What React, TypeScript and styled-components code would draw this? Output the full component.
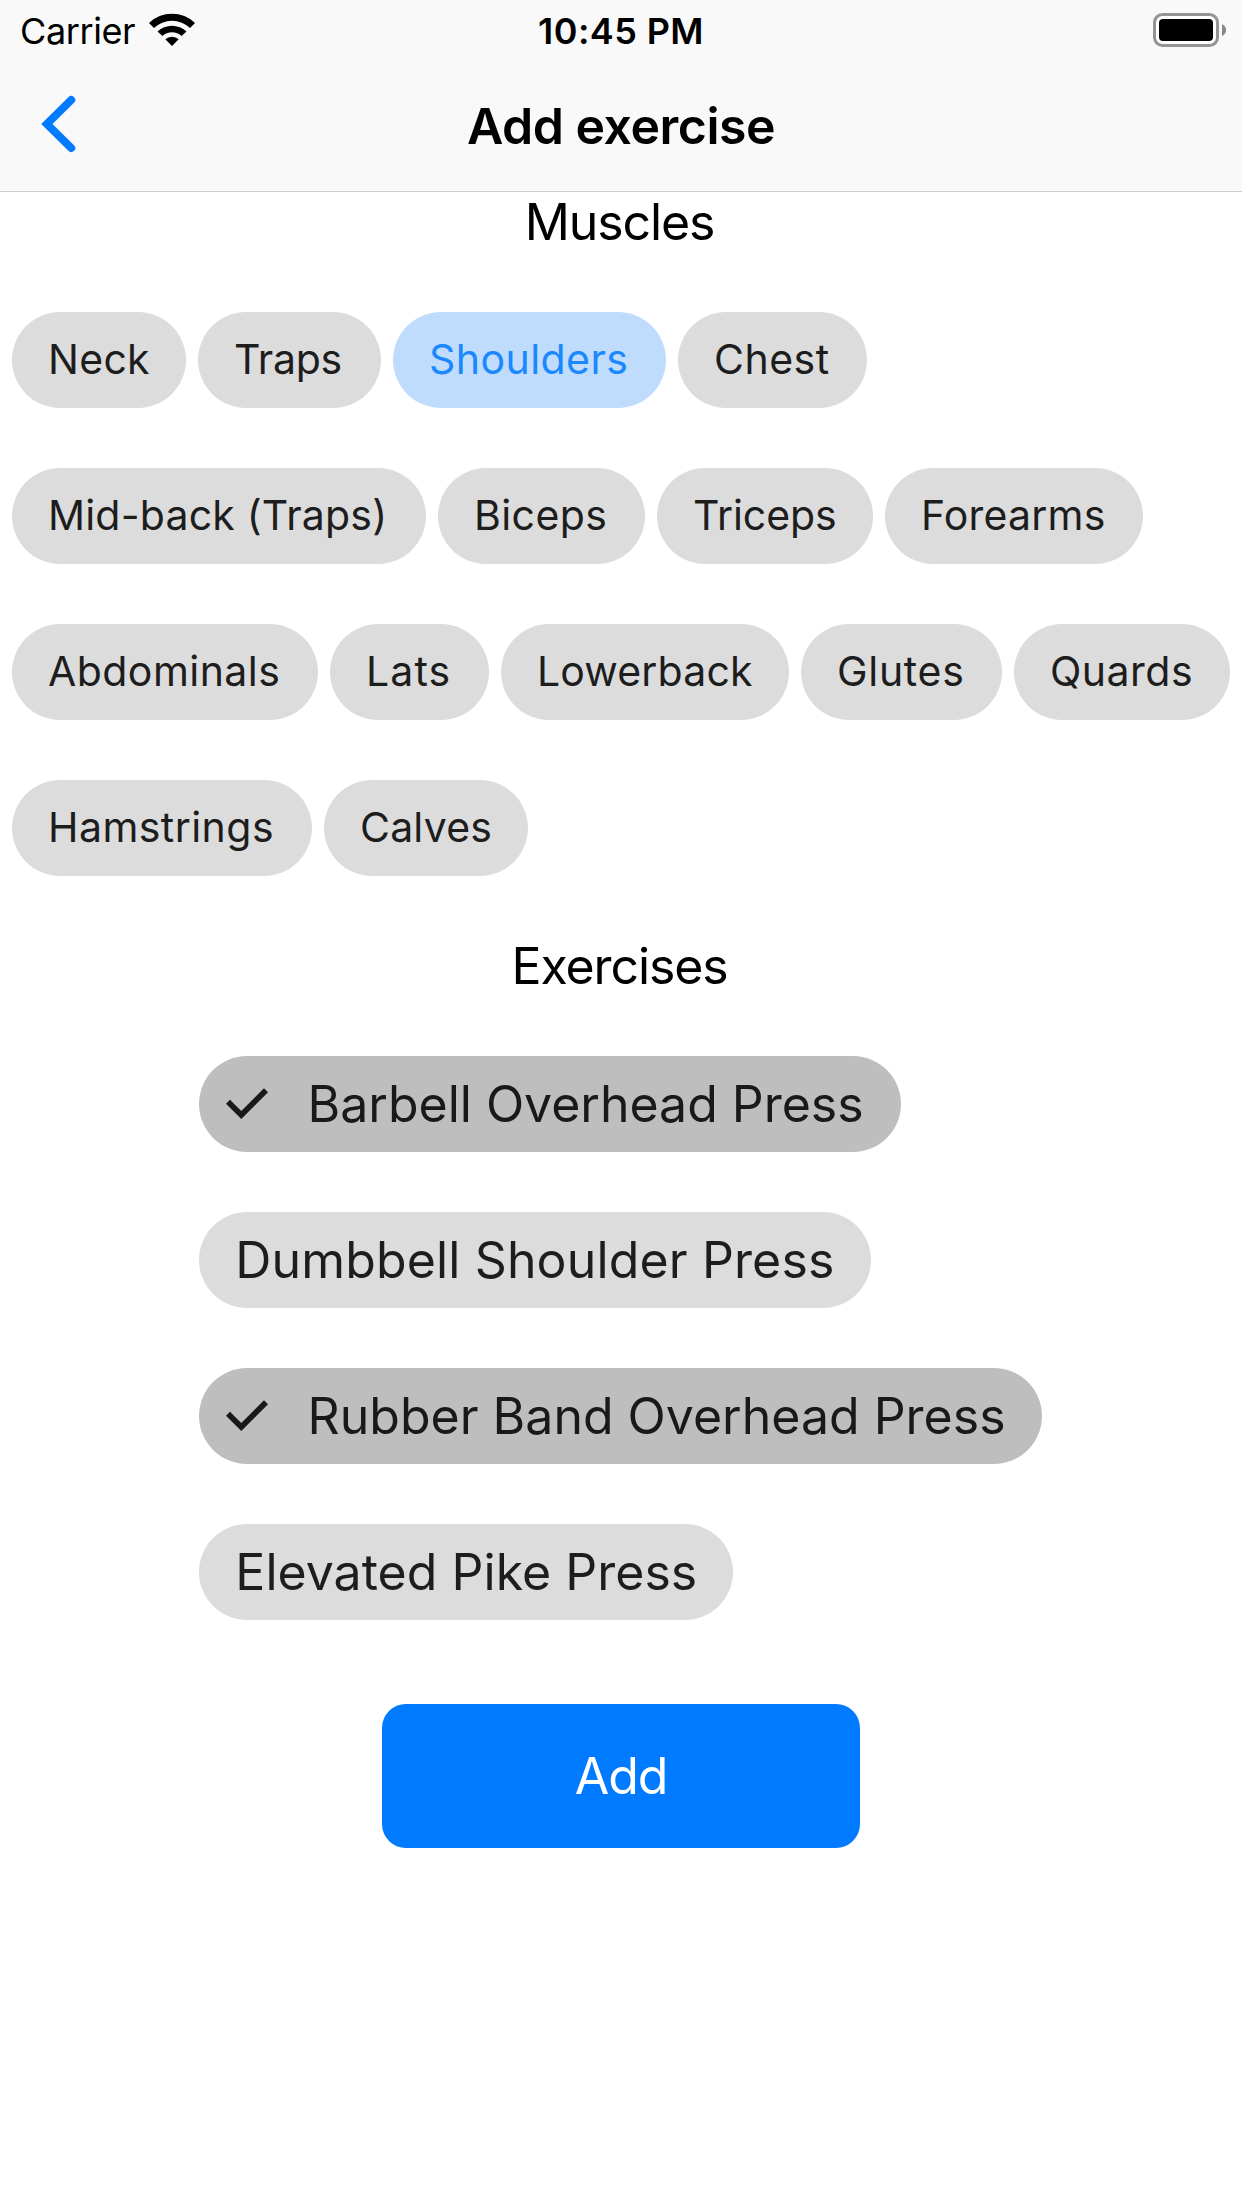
import React from "react";
import styled, { createGlobalStyle } from "styled-components";

const Global = createGlobalStyle`
  body { margin: 0; background: #fff; }
  * { box-sizing: border-box; }
`;

const Screen = styled.main`
  width: 1242px;
  height: 2208px;
  display: flex;
  flex-direction: column;
  overflow: hidden;
  background: #fff;
  color: #000;
  font-family: Inter, "Liberation Sans", sans-serif;
`;

const Header = styled.header`
  height: 192px;
  flex: none;
  background: #f9f9f9;
  border-bottom: 1px solid #cecece;
`;

const StatusBar = styled.div`
  height: 60px;
  display: grid;
  grid-template-columns: 1fr auto 1fr;
  padding: 0 16px;
`;

const Carrier = styled.div`
  display: flex;
  align-items: flex-start;
  padding-left: 4px;
`;

const CarrierName = styled.span`
  width: 128px;
  font-size: 36px;
  line-height: 63px;
  letter-spacing: -0.4px;
`;

const Clock = styled.span`
  font-size: 36px;
  line-height: 63px;
  font-weight: 600;
  letter-spacing: 0.4px;
`;

const BatterySlot = styled.div`
  display: flex;
  justify-content: flex-end;
  padding-top: 13px;
`;

const WifiIcon = styled.svg`
  margin-top: 13px;
`;

const NavBar = styled.nav`
  height: 131px;
  display: grid;
  grid-template-columns: 1fr auto 1fr;
`;

const BackButton = styled.button`
  width: 44px;
  height: 64px;
  margin: 32px 0 0 38px;
  padding: 0;
  border: 0;
  background: none;
`;

const Title = styled.h1`
  margin: 0;
  font-size: 50px;
  line-height: 132px;
  font-weight: 600;
  letter-spacing: -0.5px;
`;

const Heading = styled.h2`
  margin: 0 0 60px;
  padding-right: 3px;
  font-size: 50px;
  line-height: 60px;
  font-weight: 400;
  letter-spacing: -1.1px;
  text-align: center;
`;

const Muscles = styled.section`
  display: flex;
  flex-direction: column;
  gap: 60px;
  padding-left: 12px;
  margin-bottom: 60px;
`;

const ChipRow = styled.div`
  display: flex;
  gap: 12px;
`;

type Tone = "plain" | "active" | "checked";

const Chip = styled.button<{ $tone: Tone; $width: number; $tracking: number; $large?: boolean }>`
  width: ${(p) => p.$width}px;
  height: 96px;
  flex: none;
  display: flex;
  align-items: center;
  padding: 0 0 ${(p) => (p.$large ? 0 : 2)}px ${(p) => (p.$tone === "checked" ? 24 : 36)}px;
  border: 0;
  border-radius: 48px;
  font-family: inherit;
  font-size: ${(p) => (p.$large ? 50 : 41)}px;
  line-height: 94px;
  letter-spacing: ${(p) => p.$tracking}px;
  white-space: nowrap;
  color: ${(p) => ({ plain: "#1d1d1d", active: "#1a88ff", checked: "#191919" })[p.$tone]};
  background: ${(p) => ({ plain: "#dcdcdc", active: "#bfdcfc", checked: "#bebebe" })[p.$tone]};
`;

const CheckIcon = styled.svg`
  flex: none;
  margin-right: 36.3px;
`;

const Exercises = styled.section`
  display: flex;
  flex-direction: column;
  gap: 60px;
  padding-left: 199.3px;
`;

const AddButton = styled.button`
  width: 477.4px;
  height: 144px;
  flex: none;
  align-self: center;
  margin-top: 84px;
  border: 0;
  border-radius: 24px;
  background: #007aff;
  color: #fff;
  font-family: inherit;
  font-size: 50px;
  letter-spacing: -1.1px;
`;

const muscleRows: { name: string; width: number; tracking: number }[][] = [
  [
    { name: "Neck", width: 174, tracking: 0.3 },
    { name: "Traps", width: 183, tracking: -0.3 },
    { name: "Shoulders", width: 273, tracking: 0.45 },
    { name: "Chest", width: 189, tracking: 0.5 },
  ],
  [
    { name: "Mid-back (Traps)", width: 414, tracking: 0.2 },
    { name: "Biceps", width: 207, tracking: 0.4 },
    { name: "Triceps", width: 216, tracking: -0.1 },
    { name: "Forearms", width: 258, tracking: 0.2 },
  ],
  [
    { name: "Abdominals", width: 306, tracking: 0.45 },
    { name: "Lats", width: 159, tracking: 1.1 },
    { name: "Lowerback", width: 288, tracking: 0.15 },
    { name: "Glutes", width: 201, tracking: 0.7 },
    { name: "Quards", width: 216, tracking: 0.5 },
  ],
  [
    { name: "Hamstrings", width: 300, tracking: 0.45 },
    { name: "Calves", width: 204, tracking: 0.2 },
  ],
];

const exercises = [
  { name: "Barbell Overhead Press", width: 702, tracking: -0.02, checked: true },
  { name: "Dumbbell Shoulder Press", width: 672, tracking: 0.14, checked: false },
  { name: "Rubber Band Overhead Press", width: 843, tracking: 0, checked: true },
  { name: "Elevated Pike Press", width: 534, tracking: 0.03, checked: false },
];

export default function App() {
  return (
    <Screen>
      <Global />
      <Header>
        <StatusBar>
          <Carrier>
            <CarrierName>Carrier</CarrierName>
            <WifiIcon width="48" height="34" viewBox="0 0 48 34">
              <path d="M1 10A33 33 0 0 1 47 10L42 15A26 26 0 0 0 6 15Z" />
              <path d="M9.5 18.5A21 21 0 0 1 38.5 18.5L33.5 23A14 14 0 0 0 14.5 23Z" />
              <path d="M17.3 26.3A10 10 0 0 1 30.7 26.3L24 33Z" />
            </WifiIcon>
          </Carrier>
          <Clock>10:45 PM</Clock>
          <BatterySlot>
            <svg width="73" height="34" viewBox="0 0 73 34">
              <rect x="1.5" y="1.5" width="63" height="31" rx="8" fill="#fff" stroke="#949494" strokeWidth="3" />
              <rect x="6" y="6" width="54" height="22" rx="4" />
              <path d="M69 11Q73 13 73 17T69 23Z" fill="#888" />
            </svg>
          </BatterySlot>
        </StatusBar>
        <NavBar>
          <BackButton aria-label="Back">
            <svg width="44" height="64" viewBox="0 0 44 64">
              <path d="M33.2 8L8.9 32L33.2 56" fill="none" stroke="#007aff" strokeWidth="8" strokeLinecap="round" />
            </svg>
          </BackButton>
          <Title>Add exercise</Title>
        </NavBar>
      </Header>
      <Heading>Muscles</Heading>
      <Muscles>
        {muscleRows.map((row, i) => (
          <ChipRow key={i}>
            {row.map((m) => (
              <Chip
                key={m.name}
                $width={m.width}
                $tracking={m.tracking}
                $tone={m.name === "Shoulders" ? "active" : "plain"}
              >
                {m.name}
              </Chip>
            ))}
          </ChipRow>
        ))}
      </Muscles>
      <Heading>Exercises</Heading>
      <Exercises>
        {exercises.map((e) => (
          <Chip
            key={e.name}
            $large
            $width={e.width}
            $tracking={e.tracking}
            $tone={e.checked ? "checked" : "plain"}
          >
            {e.checked && (
              <CheckIcon width="48" height="54" viewBox="0 0 48 54">
                <path d="M5 24.8L18.3 38L43 13.3" fill="none" stroke="#191919" strokeWidth="5.7" />
              </CheckIcon>
            )}
            {e.name}
          </Chip>
        ))}
      </Exercises>
      <AddButton>Add</AddButton>
    </Screen>
  );
}
